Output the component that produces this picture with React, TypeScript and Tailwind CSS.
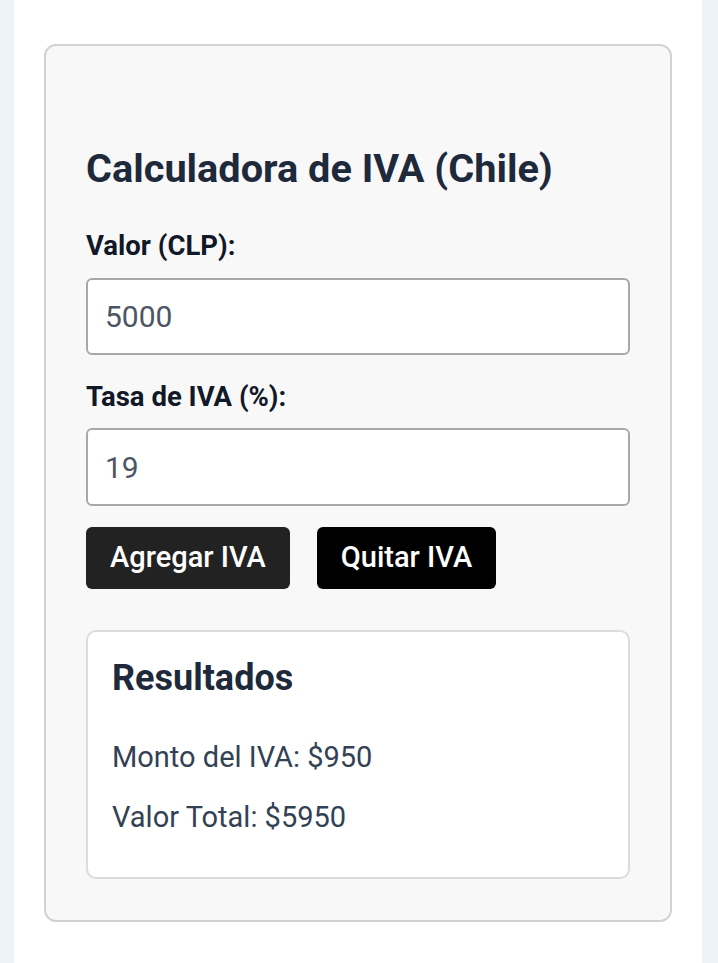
import React, { useState } from "react";

const App: React.FC = () => {
  const [valor, setValor] = useState("5000");
  const [tasa, setTasa] = useState("19");
  const [iva, setIva] = useState(950);
  const [total, setTotal] = useState(5950);

  const agregar = () => {
    const v = parseFloat(valor) || 0;
    const t = parseFloat(tasa) || 0;
    const m = Math.round((v * t) / 100);
    setIva(m);
    setTotal(v + m);
  };

  const quitar = () => {
    const v = parseFloat(valor) || 0;
    const t = parseFloat(tasa) || 0;
    const neto = Math.round(v / (1 + t / 100));
    setIva(v - neto);
    setTotal(neto);
  };

  return (
    <div
      className="min-h-screen bg-[#eef3f9]"
      style={{ fontFamily: "Roboto, 'Noto Sans', sans-serif" }}
    >
      <div className="ml-[14px] w-[688px] min-h-screen bg-white pt-[44px] pb-[44px]">
        <div className="mx-[30px] rounded-[12px] border-2 border-[#d2d2d2] bg-[#f8f8f8] px-[40px] pt-[100px] pb-[41px]">
          <h2 className="text-[39.7px] leading-[46px] font-bold text-[#1e293b]">
            Calculadora de IVA (Chile)
          </h2>

          <label className="mt-[40px] block text-[27.5px] leading-[28px] font-bold text-[#111827]">
            Valor (CLP):
          </label>
          <input
            type="number"
            value={valor}
            onChange={(e) => setValor(e.target.value)}
            className="mt-[18px] block h-[77px] w-full rounded-[6px] border-2 border-[#a8a8a8] bg-white px-[17px] text-[30px] text-[#4b5563] outline-none"
          />

          <label className="mt-[28px] block text-[27.5px] leading-[28px] font-bold text-[#111827]">
            Tasa de IVA (%):
          </label>
          <input
            type="number"
            value={tasa}
            onChange={(e) => setTasa(e.target.value)}
            className="mt-[17px] block h-[78px] w-full rounded-[6px] border-2 border-[#a8a8a8] bg-white px-[17px] text-[30px] text-[#4b5563] outline-none"
          />

          <div className="mt-[21px] flex gap-[27px]">
            <button
              onClick={agregar}
              className="h-[62px] rounded-[6px] bg-[#222222] px-[24px] text-[29px] font-medium text-white"
            >
              Agregar IVA
            </button>
            <button
              onClick={quitar}
              className="h-[62px] rounded-[6px] bg-black px-[24px] text-[29px] font-medium text-white"
            >
              Quitar IVA
            </button>
          </div>

          <div className="mt-[41px] h-[249px] rounded-[10px] border-2 border-[#dcdcdc] bg-white px-[24px] pt-[26px]">
            <h3 className="text-[36px] leading-[40px] font-bold text-[#1e293b]">
              Resultados
            </h3>
            <p className="mt-[42px] text-[29px] leading-[34px] text-[#334155]">
              Monto del IVA: ${iva}
            </p>
            <p className="mt-[26px] text-[29px] leading-[34px] text-[#334155]">
              Valor Total: ${total}
            </p>
          </div>
        </div>
      </div>
    </div>
  );
};

export default App;
